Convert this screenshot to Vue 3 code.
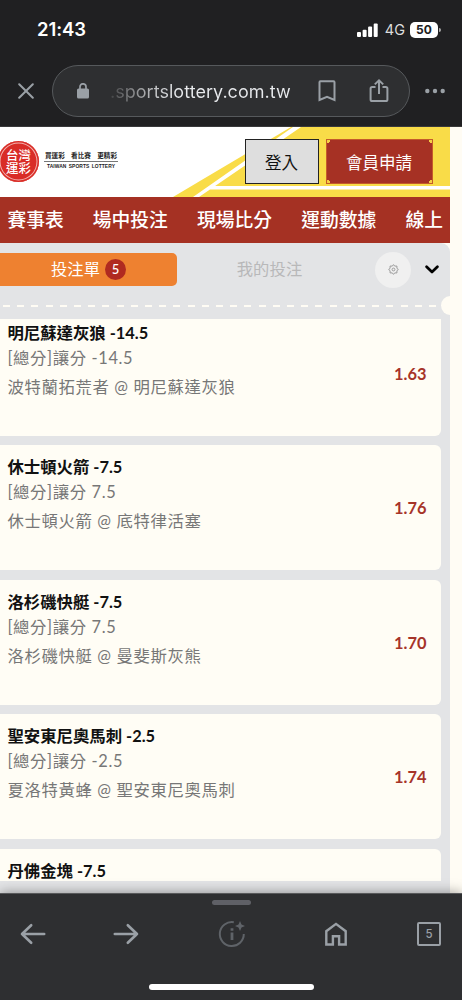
<script setup>
const nav = ['賽事表', '場中投注', '現場比分', '運動數據', '線上']
const bets = [
  { pick: '明尼蘇達灰狼 -14.5', market: '[總分]讓分 -14.5', match: '波特蘭拓荒者 @ 明尼蘇達灰狼', odds: '1.63' },
  { pick: '休士頓火箭 -7.5', market: '[總分]讓分 7.5', match: '休士頓火箭 @ 底特律活塞', odds: '1.76' },
  { pick: '洛杉磯快艇 -7.5', market: '[總分]讓分 7.5', match: '洛杉磯快艇 @ 曼斐斯灰熊', odds: '1.70' },
  { pick: '聖安東尼奧馬刺 -2.5', market: '[總分]讓分 -2.5', match: '夏洛特黃蜂 @ 聖安東尼奧馬刺', odds: '1.74' },
  { pick: '丹佛金塊 -7.5', market: '', match: '', odds: '' },
]
</script>

<template>
  <div class="phone">
    <header class="chrome">
      <div class="status">
        <span class="time">21:43</span>
        <div class="signals">
          <svg width="21" height="14" viewBox="0 0 21 14" fill="#fff">
            <rect x="0" y="9" width="4" height="5" rx="1" /><rect x="5.6" y="6.7" width="4" height="7.3" rx="1" />
            <rect x="11.1" y="3.6" width="4" height="10.4" rx="1" /><rect x="16.7" y="0.4" width="4" height="13.6" rx="1" />
          </svg>
          <span class="net">4G</span>
          <span class="battery">50</span>
          <i class="cap"></i>
        </div>
      </div>
      <div class="address">
        <svg class="close" width="16" height="16" viewBox="0 0 16 16" fill="none" stroke="#9aa0a6" stroke-width="2" stroke-linecap="round"><path d="M1.2 1.2 14.8 14.8M14.8 1.2 1.2 14.8" /></svg>
        <div class="pill">
          <svg class="lock" width="12" height="16" viewBox="0 0 12 16"><rect y="5.5" width="12" height="10" rx="1.6" fill="#9aa0a6" /><path d="M3 6V3.8a3 3 0 0 1 6 0V6" fill="none" stroke="#9aa0a6" stroke-width="1.7" /></svg>
          <span class="url">.sportslottery.com.tw</span>
          <svg class="mark" width="18" height="22" viewBox="0 0 18 22" fill="none" stroke="#9aa0a6" stroke-width="2"><path d="M1.5 2.2q0-.9.9-.9h13.2q.9 0 .9.9V20L9 16.8 1.5 20z" /></svg>
          <svg class="share" width="20" height="24" viewBox="0 0 20 24" fill="none" stroke="#9aa0a6" stroke-width="2"><path d="M6.5 8H3.2Q1.6 8 1.6 9.6V20.4Q1.6 22 3.2 22H16.8Q18.4 22 18.4 20.4V9.6Q18.4 8 16.8 8H13.5" /><path d="M10 15V1.6M5.8 5.4 10 1.4 14.2 5.4" /></svg>
        </div>
        <svg width="20" height="6" viewBox="0 0 20 6" fill="#9aa0a6"><circle cx="2.3" cy="3" r="2.2" /><circle cx="10" cy="3" r="2.2" /><circle cx="17.7" cy="3" r="2.2" /></svg>
      </div>
    </header>

    <main class="site">
      <div class="banner">
        <svg class="stripes" width="450" height="70" viewBox="0 0 450 70">
          <path d="M173 70 291 0H450V70z" fill="#f9dc48" />
          <path d="M193 70 293 0h8L199 70zM213 59H450v3.400H208z" fill="#fff" />
        </svg>
        <div class="brand">
          <div class="seal"><span>台灣</span><span>運彩</span></div>
          <div class="slogan">
            <div class="zh"><span>買運彩</span><span>看比賽</span><span>更精彩</span></div>
            <div class="en">TAIWAN SPORTS LOTTERY</div>
          </div>
        </div>
        <div class="actions">
          <button class="login">登入</button>
          <button class="join">會員申請</button>
        </div>
      </div>
      <nav class="menu"><a v-for="n in nav" :key="n">{{ n }}</a></nav>

      <section class="slip">
        <div class="tabs">
          <div class="tab on"><span>投注單</span><b>5</b></div>
          <div class="tab off"><span>我的投注</span></div>
          <div class="gear">
            <svg width="11" height="11" viewBox="0 0 22 22" fill="none" stroke="#999" stroke-width="1.900"><path d="M11 1.200 13.400 4.200 17.900 4.100 17.800 8.600 20.800 11 17.800 13.400 17.900 17.900 13.400 17.800 11 20.800 8.600 17.800 4.100 17.900 4.200 13.400 1.200 11 4.200 8.600 4.100 4.100 8.600 4.200z" stroke-linejoin="round" /><circle cx="11" cy="11" r="2.800" /></svg>
          </div>
          <svg class="chev" width="14" height="9" viewBox="0 0 14 9" fill="none" stroke="#000" stroke-width="2.700" stroke-linecap="round" stroke-linejoin="round"><path d="M1.600 1.700 7 7 12.400 1.700" /></svg>
        </div>
        <div class="tear"><i class="dash"></i><i class="notch"></i></div>
        <div class="list">
          <article v-for="b in bets" :key="b.pick" class="card">
            <div>
              <h3>{{ b.pick }}</h3>
              <p class="market">{{ b.market }}</p>
              <p class="match">{{ b.match }}</p>
            </div>
            <span class="odds">{{ b.odds }}</span>
          </article>
        </div>
      </section>
    </main>

    <footer class="toolbar">
      <i class="grip"></i>
      <div class="tools">
        <svg width="26" height="22" viewBox="0 0 26 22" fill="none" stroke="#9aa0a6" stroke-width="2.600" stroke-linecap="round" stroke-linejoin="round"><path d="M24.200 11H2M11.200 2.200 2 11l9.200 8.800" /></svg>
        <svg class="forward" width="26" height="22" viewBox="0 0 26 22" fill="none" stroke="#9aa0a6" stroke-width="2.600" stroke-linecap="round" stroke-linejoin="round"><path d="M1.800 11H24M14.800 2.200 24 11l-9.200 8.800" /></svg>
        <svg class="info" width="28" height="28" viewBox="0 0 28 28" fill="none" stroke="#5f6368" stroke-width="2"><path d="M15.800 2.200A12 12 0 1 0 25.800 14" /><path d="M14 12.500v7.500" stroke-width="2.800" /><path d="M12.600 8.200h2.800v2.600h-2.800zM22 1l1.500 3.500L27 6l-3.500 1.500L22 11l-1.500-3.500L17 6l3.500-1.500z" fill="#5f6368" stroke="none" /></svg>
        <svg class="house" width="22" height="24" viewBox="0 0 22 24" fill="none" stroke="#9aa0a6" stroke-width="2.400"><path d="M1.300 22.500V9.200L11 1.900 20.700 9.200V22.500H14.100V14.200H7.900V22.500z" /></svg>
        <span class="count">5</span>
      </div>
      <i class="home"></i>
    </footer>
  </div>
</template>

<style>
body { margin: 0; overflow: hidden; }
</style>

<style scoped>
* { box-sizing: border-box; }
.phone { width: 462px; height: 1000px; overflow: hidden; display: flex; flex-direction: column; background: #fffcf4; font-family: Lato, "Noto Sans CJK TC", sans-serif; }
svg { display: block; flex: none; }
.chrome { height: 127px; flex: none; background: #202022; border-bottom: 1px solid #39393b; font-family: Inter, sans-serif; }
.status { height: 65px; padding: 17px 22px 0 37px; display: flex; justify-content: space-between; align-items: flex-start; }
.time { color: #fff; font-size: 18.500px; font-weight: 600; line-height: 25px; letter-spacing: -.1px; }
.signals { display: flex; align-items: center; height: 25px; color: #fff; }
.signals > svg { margin-right: 1px; }
.net { font-size: 14.500px; margin: 0 5px 0 6px; color: #ddd; }
.battery { width: 28px; height: 16px; border-radius: 5px; background: #fff; color: #202022; font-weight: 700; font-size: 12px; line-height: 16px; text-align: center; }
.cap { width: 2px; height: 4px; margin-left: 1px; margin-right: -1px; background: #aaa; border-radius: 0 2px 2px 0; }
.address { display: flex; align-items: center; padding-left: 18px; height: 52px; }
.pill { margin: 0 15px 0 18px; width: 358px; height: 52px; flex: none; border: 1px solid #56595c; border-radius: 26px; background: #2e2f31; display: flex; align-items: center; }
.lock { margin-left: 24px; }
.url { margin-left: 21px; width: 181px; flex: none; white-space: nowrap; font-size: 18px; letter-spacing: .03px; color: transparent; background: linear-gradient(90deg, #434446 0, #77787a 18px, #b2b3b5 38px, #e8eaed 68px); background-clip: text; -webkit-background-clip: text; }
.mark { margin-left: 27px; }
.share { margin-left: 33px; }
.site { height: 766px; flex: none; width: 450px; display: flex; flex-direction: column; }
.banner { height: 70px; flex: none; position: relative; background: #fff; display: flex; justify-content: space-between; }
.stripes { position: absolute; inset: 0; }
.brand { position: relative; display: flex; align-items: flex-start; }
.seal { width: 41px; height: 41px; margin: 14px 0 0 -2px; border-radius: 50%; background: #d92c26; box-shadow: inset 0 0 0 1.500px #d92c26, inset 0 0 0 2.500px #f3b2ae; color: #fff; font-weight: 500; font-size: 12.400px; line-height: 13px; display: flex; flex-direction: column; justify-content: center; align-items: center; }
.slogan { margin: 24px 0 0 5px; width: 74px; color: #222; }
.zh { display: flex; justify-content: space-between; padding: 0 1px; font-size: 6.600px; line-height: 9px; font-weight: 700; border-bottom: 1px solid #777; height: 11px; }
.en { font: 700 4.900px/9px "Liberation Sans", sans-serif; text-align: center; white-space: nowrap; word-spacing: .8px; letter-spacing: .1px; }
.actions { position: relative; display: flex; gap: 7px; padding: 12px 17.500px 0 0; }
button { font: 400 16.500px/40px "Noto Sans CJK TC", sans-serif; height: 45px; padding: 0; }
.login { width: 74px; background: #dedede; border: 1.500px solid #222; color: #111; }
.join { width: 107px; border: 1px solid #c55b2a; color: #fff; background: radial-gradient(circle at 0 0, #f5cf44 3px, transparent 3.500px), radial-gradient(circle at 100% 0, #f5cf44 3px, transparent 3.500px), radial-gradient(circle at 0 100%, #f5cf44 3px, transparent 3.500px), radial-gradient(circle at 100% 100%, #f5cf44 3px, #a63124 3.500px); }
.menu { height: 46px; flex: none; background: #a53123; display: flex; gap: 29.200px; padding-left: 7.400px; overflow: hidden; color: #fff; font-size: 18.750px; font-weight: 500; line-height: 45px; white-space: nowrap; }
.slip { height: 650px; background: #e3e4e6; border-radius: 0 9px 0 0; }
.tabs { height: 53px; display: flex; align-items: center; }
.tab { height: 33px; border-radius: 5px; display: flex; align-items: center; justify-content: center; font-size: 16.300px; letter-spacing: .1px; }
.tab span { line-height: 24px; margin-top: -2px; }
.on { width: 177px; background: #ee8130; border-radius: 0 5px 5px 0; color: #fff; }
.on b { width: 21px; height: 21px; margin-left: 5px; border-radius: 50%; background: #b02a20; font-size: 13px; line-height: 21px; font-weight: 500; text-align: center; }
.off { width: 185px; color: #b8b8b9; }
.gear { width: 36px; height: 36px; margin: 0 14px 0 13px; border-radius: 50%; background: #f0f0f0; display: grid; place-items: center; }
.tear { height: 23px; width: 450px; display: flex; align-items: center; overflow: hidden; margin-top: -2px; }
.dash { height: 2px; width: 438px; margin: 0 0 0 3px; flex: none; background: repeating-linear-gradient(90deg, #fffcf4 0 7px, transparent 7px 14.200px); }
.notch { width: 19px; height: 19px; flex: none; margin-top: -1px; border-radius: 50%; background: #fffcf4; }
.list { height: 562px; width: 441px; margin-top: 2px; overflow: hidden; display: flex; flex-direction: column; gap: 9.500px; }
.card { height: 125px; flex: none; background: #fffdf5; border-radius: 0 6px 6px 0; padding: 10px 14.500px 0 7.400px; display: flex; justify-content: space-between; }
.card:first-child { margin-top: -8.500px; }
h3, p { margin: 0; white-space: nowrap; }
h3 { font-size: 16.400px; line-height: 24px; font-weight: 700; color: #111; }
p { font-size: 16.400px; color: #777; letter-spacing: .63px; }
.market { line-height: 26px; }
.match { line-height: 30px; margin-top: 1px; }
.odds { margin-top: 43px; font-size: 16.400px; line-height: 20px; font-weight: 700; color: #a63429; }
.toolbar { height: 107px; flex: none; position: relative; background: #2e2f31; border-top: 1px solid #58595b; box-shadow: 0 0 12px #0006; display: flex; flex-direction: column; align-items: center; }
.grip { width: 39px; height: 5px; margin-top: 6px; border-radius: 3px; background: #5f6066; }
.tools { width: 462px; height: 56px; padding: 2px 0 0 20px; display: flex; align-items: center; }
.forward { margin-left: 67px; }
.info { margin-left: 79px; }
.house { margin-left: 79px; }
.count { margin-left: 70px; width: 24px; height: 24px; border: 2px solid #9aa0a6; border-radius: 2px; color: #9aa0a6; font: 500 11.500px/20px Inter, sans-serif; text-align: center; }
.home { width: 165px; height: 6px; margin-top: 23px; border-radius: 3px; background: #fff; }
</style>
